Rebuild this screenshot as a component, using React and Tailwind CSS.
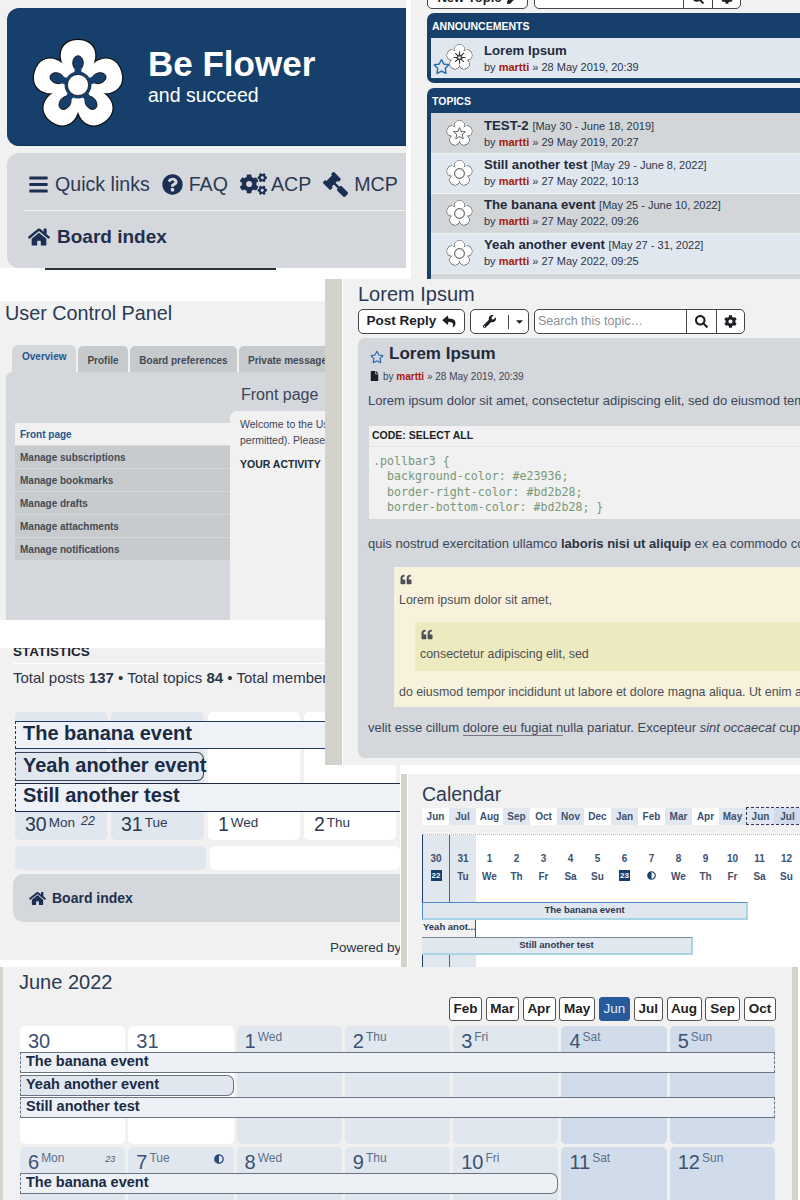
import React from 'react';
import {
  FaBars, FaQuestionCircle, FaCogs, FaGavel, FaHome, FaSearch, FaCog, FaWrench,
  FaReply, FaCaretDown, FaFile, FaQuoteLeft, FaAdjust, FaRegStar, FaPen,
} from 'react-icons/fa';

const PETAL = 'M-7 -10 C-24 -24 -21 -47 0 -47 C21 -47 24 -24 7 -10 Z';
const ANGLES = [0, 72, 144, 216, 288];

function Logo() {
  return (
    <svg viewBox="-50 -50 100 100" className="w-[96px] h-[96px] shrink-0 mt-[16px]">
      {ANGLES.map((a) => <path key={a} d={PETAL} transform={`rotate(${a})`} fill="#fff" stroke="#111" strokeWidth="2.6" />)}
      {ANGLES.map((a) => <path key={a} d={PETAL} transform={`rotate(${a})`} fill="#fff" />)}
      {ANGLES.map((a) => <ellipse key={a} cx="0" cy="-23" rx="5.5" ry="7.5" transform={`rotate(${a})`} fill="#173f6b" stroke="#111" strokeWidth="0.9" />)}
      <circle r="14" fill="#173f6b" />
      {ANGLES.map((a) => <rect key={a} x="-3.5" y="-24" width="7" height="12" transform={`rotate(${a})`} fill="#173f6b" />)}
      <circle r="11" fill="#fff" stroke="#111" strokeWidth="0.8" />
    </svg>
  );
}

function TopicIcon({ variant }) {
  return (
    <svg viewBox="-50 -50 100 100" className="w-[27px] h-[27px] shrink-0">
      {ANGLES.map((a) => <path key={a} d={PETAL} transform={`rotate(${a})`} fill="#fff" stroke="#333" strokeWidth="3.5" />)}
      {ANGLES.map((a) => <path key={a} d={PETAL} transform={`rotate(${a})`} fill="#fff" />)}
      {variant === 'flower' && <circle r="18" fill="#fff" stroke="#333" strokeWidth="3.5" />}
      {variant === 'star' && <polygon points="0,-22 6,-7 22,-7 10,4 14,20 0,11 -14,20 -10,4 -22,-7 -6,-7" fill="#fff" stroke="#444" strokeWidth="3" />}
      {variant === 'ann' && (
        <g stroke="#333" strokeWidth="4" strokeLinecap="round">
          {[0, 45, 90, 135].map((a) => <line key={a} x1="0" y1="-21" x2="0" y2="21" transform={`rotate(${a})`} />)}
          <circle r="7" fill="#fff" />
        </g>
      )}
    </svg>
  );
}

function TopicRow({ title, range, date, icon, tint, star, h, textPad }) {
  return (
    <div className={`relative flex items-center ${h} ${tint} pl-[15px] border-b border-[#eef0f0]`}>
      <TopicIcon variant={icon} />
      {star && <FaRegStar className="absolute left-[2px] bottom-[2px] text-[#2a6cb0] w-[17px] h-[17px]" />}
      <div className={`ml-[11px] ${textPad}`}>
        <div className="text-[13.2px] leading-[17px] font-bold text-[#1f2a3c] whitespace-nowrap">
          {title} <span className="text-[11px] font-normal text-[#2b3648]">{range}</span>
        </div>
        <div className="text-[11px] leading-[15px] text-[#2b3648] whitespace-nowrap">
          by <span className="font-bold text-[#a8190c]">martti</span> » {date}
        </div>
      </div>
    </div>
  );
}

function TopicBox({ name, children, className }) {
  return (
    <div className={`bg-[#173f6b] rounded-l-[7px] pl-[4px] pb-[4px] ${className}`}>
      <div className="h-[25px] pt-[3px] flex items-center pl-[1px] text-[10.5px] font-bold text-white">{name}</div>
      {children}
    </div>
  );
}

function MenuLink({ icon, label }) {
  return (
    <div className="flex items-center gap-[6px] whitespace-nowrap">
      {icon}
      <span className="text-[19.6px] text-[#2b3a54]">{label}</span>
    </div>
  );
}

function TopLeft() {
  return (
    <div className="absolute left-0 top-0 w-[411px] h-[270px] bg-white">
      <div className="w-[406px] h-[268px] bg-[#f0f1f0] pl-[7px] pt-[8px]">
        <div className="h-[138px] bg-[#173f6b] rounded-l-[12px] flex items-center pl-[23px] border-b border-[#0d2e5c]">
          <Logo />
          <div className="ml-[22px] text-white">
            <div className="text-[35px] leading-[38px] font-bold -mt-[2px]">Be Flower</div>
            <div className="text-[19.5px] leading-[24px]">and succeed</div>
          </div>
        </div>
        <div className="mt-[7px] h-[115px] bg-[#d4d7db] rounded-l-[12px] pl-[17px] pt-[16px]">
          <div className="flex items-center gap-[12px] h-[31px] pl-[4px]">
            <MenuLink icon={<FaBars className="w-[21px] h-[21px] text-[#1a2f52]" />} label="Quick links" />
            <MenuLink icon={<FaQuestionCircle className="w-[21px] h-[21px] text-[#1a2f52]" />} label="FAQ" />
            <div className="flex items-center gap-[4px] whitespace-nowrap">
              <FaCogs className="w-[27px] h-[24px] text-[#1a2f52]" />
              <span className="text-[19.6px] text-[#2b3a54]">ACP</span>
            </div>
            <MenuLink icon={<FaGavel className="w-[25px] h-[25px] text-[#1a2f52] -scale-x-100" />} label="MCP" />
          </div>
          <div className="mt-[10px] h-px bg-[#f0f1f0]" />
          <div className="flex items-center gap-[7px] pl-[4px] mt-[12px]">
            <FaHome className="w-[22px] h-[20px] text-[#1a2f52]" />
            <span className="text-[19px] font-bold text-[#1f2f4e]">Board index</span>
          </div>
        </div>
      </div>
      <div className="ml-[45px] w-[231px] h-[2px] bg-[#2b2f38]" />
    </div>
  );
}

function TopRight() {
  return (
    <div className="absolute left-[411px] top-0 w-[389px] h-[279px] bg-[#f0f1f0] overflow-hidden pl-[16px]">
      <div className="flex gap-[6px] -mt-[13px] h-[22px] text-[13px] font-bold text-[#222]">
        <div className="w-[101px] h-[22px] bg-white border border-[#444] rounded-[5px] flex items-center justify-center gap-[5px]">
          New Topic <FaPen className="w-[11px] h-[11px]" />
        </div>
        <div className="w-[207px] h-[22px] bg-white border border-[#444] rounded-[5px] flex items-center justify-end">
          <div className="w-[29px] h-full border-l border-[#444] flex items-center justify-center"><FaSearch className="w-[12px] h-[12px]" /></div>
          <div className="w-[28px] h-full border-l border-[#444] flex items-center justify-center"><FaCog className="w-[12px] h-[12px]" /></div>
        </div>
      </div>
      <TopicBox name="ANNOUNCEMENTS" className="mt-[4px] h-[70px]">
        <TopicRow title="Lorem Ipsum" date="28 May 2019, 20:39" icon="ann" tint="bg-[#e1e7ef]" star h="h-[40px]" textPad="pt-[1px]" />
      </TopicBox>
      <TopicBox name="TOPICS" className="mt-[5px] h-[200px]">
        <TopicRow title="TEST-2" range="[May 30 - June 18, 2019]" date="29 May 2019, 20:27" icon="star" tint="bg-[#d3d6d9]" h="h-[41px]" />
        <TopicRow title="Still another test" range="[May 29 - June 8, 2022]" date="27 May 2022, 10:13" icon="flower" tint="bg-[#e1e7ef]" h="h-[40px]" textPad="pb-[3px]" />
        <TopicRow title="The banana event" range="[May 25 - June 10, 2022]" date="27 May 2022, 09:26" icon="flower" tint="bg-[#d3d6d9]" h="h-[40px]" textPad="pb-[3px]" />
        <TopicRow title="Yeah another event" range="[May 27 - 31, 2022]" date="27 May 2022, 09:25" icon="flower" tint="bg-[#e1e7ef]" h="h-[40px]" textPad="pb-[3px]" />
        <div className="h-[20px] bg-[#d3d6d9]" />
      </TopicBox>
    </div>
  );
}

function ControlPanel() {
  const items = ['Manage subscriptions', 'Manage bookmarks', 'Manage drafts', 'Manage attachments', 'Manage notifications'];
  return (
    <div className="absolute left-0 top-[301px] w-[325px] h-[319px] bg-[#f0f1f0] overflow-hidden">
      <div className="pl-[5px] text-[19.8px] leading-[24px] text-[#2b3a54]">User Control Panel</div>
      <div className="flex items-end pl-[12px] mt-[20px] gap-[2px] text-[10px] font-bold h-[27px] whitespace-nowrap">
        <div className="w-[64px] shrink-0 h-[27px] bg-[#d4d7db] rounded-t-[6px] text-[#25568f] pl-[10px] pt-[4px]">Overview</div>
        <div className="w-[50px] shrink-0 h-[26px] bg-[#c7cacd] rounded-t-[5px] text-[#444a55] text-center pt-[7px]">Profile</div>
        <div className="w-[107px] shrink-0 h-[26px] bg-[#c7cacd] rounded-t-[5px] text-[#444a55] text-center pt-[7px]">Board preferences</div>
        <div className="w-[100px] shrink-0 h-[26px] bg-[#c7cacd] rounded-t-[5px] text-[#444a55] pl-[9px] pt-[7px]">Private messages</div>
      </div>
      <div className="ml-[6px] h-[248px] bg-[#d4d7db] rounded-tl-[6px] flex">
        <div className="w-[224px] pl-[9px] pt-[51px] text-[10px] font-bold text-[#444a55]">
          <div className="h-[22px] bg-[#f0f1f0] text-[#25568f] pl-[5px] flex items-center">Front page</div>
          {items.map((t) => (
            <div key={t} className="h-[23px] bg-[#c8cbce] pl-[5px] flex items-center border-t border-[#d4d7db]">{t}</div>
          ))}
        </div>
        <div className="flex-1 relative whitespace-nowrap overflow-hidden">
          <div className="pl-[11px] pt-[12px] h-[39px] text-[16px] leading-[22px] text-[#3b4658]">Front page</div>
          <div className="h-full bg-[#f0f1f0] rounded-tl-[7px] pl-[10px] pt-[5px] text-[10.5px] leading-[16px] text-[#3b4658]">
            <div>Welcome to the User Control Panel</div>
            <div>permitted). Please note</div>
            <div className="mt-[8px] font-bold text-[#222b3a]">YOUR ACTIVITY</div>
          </div>
        </div>
      </div>
    </div>
  );
}

function TopicPage() {
  return (
    <div className="absolute left-[325px] top-[279px] w-[475px] h-[486px] flex overflow-hidden bg-white">
      <div className="w-[17px] bg-[#d3d3cb] shrink-0" />
      <div className="ml-px flex-1 bg-[#f0f1f0] pl-[15px] whitespace-nowrap min-w-0">
        <div className="text-[20px] leading-[24px] mt-[3px] text-[#2b3a54]">Lorem Ipsum</div>
        <div className="flex gap-[5px] mt-[3px] h-[25px] text-[#1c1f26]">
          <div className="w-[107px] bg-white border border-[#444] rounded-[5px] flex items-center justify-center gap-[6px] text-[13.5px] font-bold">
            Post Reply <FaReply className="w-[14px] h-[13px]" />
          </div>
          <div className="w-[59px] bg-white border border-[#444] rounded-[5px] flex items-center">
            <FaWrench className="w-[13px] h-[13px] ml-[12px]" />
            <div className="w-px h-[14px] bg-[#444] ml-[12px]" />
            <FaCaretDown className="w-[11px] h-[11px] ml-[5px]" />
          </div>
          <div className="w-[211px] bg-white border border-[#444] rounded-[5px] flex items-center text-[12.5px] text-[#8a8f97] pl-[3px]">
            <span className="flex-1">Search this topic…</span>
            <div className="w-[30px] h-full border-l border-[#444] flex items-center justify-center text-[#1c1f26]"><FaSearch className="w-[13px] h-[13px]" /></div>
            <div className="w-[28px] h-full border-l border-[#444] flex items-center justify-center text-[#1c1f26]"><FaCog className="w-[13px] h-[13px]" /></div>
          </div>
        </div>
        <div className="mt-[4px] h-[420px] bg-[#d4d7db] rounded-l-[7px] pl-[10px] text-[#3b4658] text-[13px]">
          <div className="flex items-center pt-[5px] h-[27px] ml-[2px]">
            <FaRegStar className="w-[14px] h-[14px] text-[#2a6cb0] mt-[6px]" />
            <span className="ml-[5px] text-[17px] font-bold text-[#1f2a3c]">Lorem Ipsum</span>
          </div>
          <div className="flex items-center gap-[4px] h-[20px] mt-[1px] ml-[2px] text-[10px] text-[#3b4658]">
            <FaFile className="w-[9px] h-[10px] text-[#1c1f26]" />
            <span>by <span className="font-bold text-[#a8190c]">martti</span> » 28 May 2019, 20:39</span>
          </div>
          <div className="mt-[6px] leading-[18px]">Lorem ipsum dolor sit amet, consectetur adipiscing elit, sed do eiusmod tempor incididunt</div>
          <div className="mt-[16px] ml-px bg-[#f0f1f0]">
            <div className="h-[21px] flex items-center pl-[3px] text-[10.5px] font-bold text-[#1c1f26] border-b border-[#e1e7ef]">CODE: SELECT ALL</div>
            <pre className="pl-[4px] pt-[7px] pb-[4px] font-['DejaVu_Sans_Mono',monospace] text-[11.6px] leading-[15.3px] text-[#789878]">{`.pollbar3 {
  background-color: #e23936;
  border-right-color: #bd2b28;
  border-bottom-color: #bd2b28; }`}</pre>
          </div>
          <div className="mt-[16px] leading-[18px]">quis nostrud exercitation ullamco <b className="text-[#2b3442]">laboris nisi ut aliquip</b> ex ea commodo consequat</div>
          <div className="mt-[14px] ml-[26px] h-[140px] bg-[#f8f2dc] pl-[5px] pt-[7px] text-[#4a4f56] text-[12.4px]">
            <FaQuoteLeft className="w-[14px] h-[11px] text-[#4a4f5a]" />
            <div className="mt-[7px] leading-[16px]">Lorem ipsum dolor sit amet,</div>
            <div className="mt-[14px] ml-[16px] h-[49px] bg-[#eeeac0] pl-[5px] pt-[7px]">
              <FaQuoteLeft className="w-[14px] h-[11px] text-[#4a4f5a]" />
              <div className="mt-[6px] leading-[16px]">consectetur adipiscing elit, sed</div>
            </div>
            <div className="mt-[13px] leading-[16px]">do eiusmod tempor incididunt ut labore et dolore magna aliqua. Ut enim ad minim</div>
          </div>
          <div className="mt-[12px] leading-[18px]">velit esse cillum <span className="border-b border-[#778]">dolore eu fugiat n</span>ulla pariatur. Excepteur <i>sint occaecat</i> cupidatat non</div>
        </div>
      </div>
    </div>
  );
}

function DayCell({ num, day, week, tint }) {
  return (
    <div className={`rounded-[5px] h-[128px] flex items-end pl-[10px] pb-[6px] gap-[2px] ${tint} text-[#2b3a54] whitespace-nowrap`}>
      <span className="text-[19.5px] leading-[20px]">{num}</span>
      <span className="text-[13.5px] leading-[16px] pb-[3px]">{day}</span>
      {week && <i className="text-[12.5px] leading-[16px] pb-[5px] ml-[4px]">{week}</i>}
    </div>
  );
}

const STAT_BAR = "absolute left-0 border-y border-l [border-left-style:dashed] pl-[7px] text-[20px] font-bold text-[#1a2b45] whitespace-nowrap";

function Stats() {
  return (
    <div className="absolute left-0 top-[648px] w-[400px] h-[312px] bg-[#f0f1f0] overflow-hidden">
      <div className="ml-[13px] h-[20px] -mt-[4px] text-[13.5px] leading-[16px] font-bold text-[#1c2330] border-b border-white">STATISTICS</div>
      <div className="pl-[13px] mt-[4px] text-[15px] leading-[20px] text-[#2b3648] whitespace-nowrap">
        Total posts <b>137</b> • Total topics <b>84</b> • Total members <b>9</b>
      </div>
      <div className="relative mt-[24px] ml-[15px] grid grid-cols-[92px_93px_92px_92px] gap-x-[4px]">
        <DayCell num="30" day="Mon" week="22" tint="bg-[#e1e7ef]" />
        <DayCell num="31" day="Tue" tint="bg-[#e1e7ef]" />
        <DayCell num="1" day="Wed" tint="bg-white" />
        <DayCell num="2" day="Thu" tint="bg-white" />
        <div className={`${STAT_BAR} top-[9px] w-[390px] h-[28px] bg-[#eef1f5] border-[#1f3a63] leading-[23px]`}>The banana event</div>
        <div className="absolute left-0 top-[40px] w-[189px] h-[29px] bg-[#e1e7ef] border border-[#3a4458] [border-left-style:dashed] rounded-r-[7px] pl-[7px] text-[20px] leading-[24px] font-bold text-[#1a2b45] whitespace-nowrap">Yeah another event</div>
        <div className={`${STAT_BAR} top-[71px] w-[390px] h-[29px] bg-[#eef1f5] border-[#1f2a44] leading-[22px]`}>Still another test</div>
      </div>
      <div className="flex gap-[4px] mt-[6px] ml-[15px] h-[24px]">
        <div className="w-[191px] bg-[#e1e7ef] rounded-[5px]" />
        <div className="w-[190px] bg-white rounded-[5px]" />
      </div>
      <div className="mt-[4px] ml-[13px] h-[48px] bg-[#d4d7db] rounded-l-[10px] flex items-center pl-[16px] gap-[6px]">
        <FaHome className="w-[17px] h-[15px] text-[#1a2f52]" />
        <span className="text-[14px] font-bold text-[#1f2f4e]">Board index</span>
      </div>
      <div className="mt-[17px] pl-[330px] text-[13.5px] leading-[18px] text-[#2b3648] whitespace-nowrap">Powered by</div>
    </div>
  );
}

const STRIP_MONTHS = ['Jun', 'Jul', 'Aug', 'Sep', 'Oct', 'Nov', 'Dec', 'Jan', 'Feb', 'Mar', 'Apr', 'May'];
const COL_DAYS = [
  ['30', '22'], ['31', 'Tu'], ['1', 'We'], ['2', 'Th'], ['3', 'Fr'], ['4', 'Sa'], ['5', 'Su'],
  ['6', '23'], ['7', 'moon'], ['8', 'We'], ['9', 'Th'], ['10', 'Fr'], ['11', 'Sa'], ['12', 'Su'],
];

function CalendarWin() {
  return (
    <div className="absolute left-[401px] top-[774px] w-[399px] h-[193px] flex overflow-hidden bg-white">
      <div className="w-[6px] bg-[#d3d3cb] shrink-0" />
      <div className="ml-px flex-1 min-w-0 bg-[#f0f1f0] pl-[14px] whitespace-nowrap">
        <div className="text-[19.5px] leading-[24px] mt-[8px] text-[#2b3a54]">Calendar</div>
        <div className="flex mt-[2px] text-[10px] font-bold text-[#3d5070] h-[17px]">
          {STRIP_MONTHS.map((m, i) => (
            <div key={m} className={`w-[27px] shrink-0 flex items-center justify-center ${i % 2 ? 'bg-[#e1e7ef]' : 'bg-white'}`}>{m}</div>
          ))}
          <div className="flex border border-dashed border-[#2b3a54] -my-px h-[18px]">
            <div className="w-[27px] shrink-0 flex items-center justify-center bg-[#e1e7ef]">Jun</div>
            <div className="w-[27px] shrink-0 flex items-center justify-center bg-[#d1dcea]">Jul</div>
            <div className="w-[27px] shrink-0 bg-[#e1e7ef]" />
          </div>
        </div>
        <div className="relative mt-[9px] h-[140px] bg-white border-t border-dotted border-[#8fc5e0]">
          <div className="flex h-full text-[10px] font-bold text-[#3d5070]">
            {COL_DAYS.map(([n, d], i) => (
              <div key={n} className={`w-[27px] shrink-0 flex flex-col items-center pt-[17px] ${i < 2 ? 'bg-[#e1e7ef]' : ''} ${i === 0 ? 'border-l border-[#1f3a63]' : ''} ${i === 1 ? 'border-l border-[#5a6478]' : ''}`}>
                <span className="h-[18px] leading-[14px]">{n}</span>
                {d === 'moon' ? <FaAdjust className="mt-[1px] w-[9px] h-[9px] text-[#173f6b]" /> : null}
                {d === '22' || d === '23' ? <span className="w-[11px] h-[11px] bg-[#173f6b] text-white text-[8px] leading-[11px] text-center">{d}</span> : null}
                {d !== 'moon' && d !== '22' && d !== '23' ? <span className="leading-[14px]">{d}</span> : null}
              </div>
            ))}
          </div>
          <div className="absolute left-0 top-[67px] w-[326px] h-[18px] bg-[#e1e7ef] border-t border-l border-[#4a8ac8] border-r-2 border-b-2 border-r-[#a8d4e8] border-b-[#a8d4e8] text-center text-[9.5px] leading-[14px] font-bold text-[#2b3a54]">The banana event</div>
          <div className="absolute left-0 top-[85px] w-[54px] h-[17px] bg-[#f0f1f0] border-r border-[#2b5ea0] text-[9.5px] leading-[14px] font-bold text-[#2b3a54] pl-[1px] overflow-hidden">Yeah anot...</div>
          <div className="absolute left-0 top-[102px] w-[271px] h-[18px] bg-[#e1e7ef] border-t border-[#7c8798] border-r-2 border-b-2 border-r-[#a8d4e8] border-b-[#a8d4e8] text-center text-[9.5px] leading-[14px] font-bold text-[#2b3a54]">Still another test</div>
        </div>
      </div>
    </div>
  );
}

const BUTTON_MONTHS = [
  ['Feb', 'w-[33px]'], ['Mar', 'w-[33px]'], ['Apr', 'w-[33px]'], ['May', 'w-[36px]'], ['Jun', 'w-[31px]'],
  ['Jul', 'w-[29px]'], ['Aug', 'w-[35px]'], ['Sep', 'w-[35px]'], ['Oct', 'w-[32px]'],
];

function JuneCell({ num, day, tint, extra }) {
  return (
    <div className={`rounded-[5px] h-[118px] ${tint} pl-[8px] pt-[3px] flex items-start gap-[2px] text-[#3b5272] relative`}>
      <span className="text-[20px] leading-[24px]">{num}</span>
      <span className="text-[12px] leading-[16px] text-[#5a6f8c]">{day}</span>
      {extra}
    </div>
  );
}

function JuneBar({ top, width, title, rounded, tint }) {
  return (
    <div className={`absolute left-0 ${top} ${width} h-[21px] border border-[#6a7486] [border-left-style:dashed] pl-[5px] text-[14.5px] leading-[17px] font-bold text-[#1a2b45] whitespace-nowrap ${rounded ? 'rounded-r-[7px]' : '[border-right-style:dashed]'} ${tint}`}>
      {title}
    </div>
  );
}

function JuneWin() {
  const blue = 'bg-[#e1e7ef]';
  const sat = 'bg-[#d1dcea]';
  return (
    <div className="absolute left-0 top-[967px] w-[800px] h-[233px] flex overflow-hidden bg-white">
      <div className="w-[3px] bg-[#d3d3cb] shrink-0" />
      <div className="w-[789px] bg-[#f0f1f0] pl-[16px]">
        <div className="text-[20px] leading-[24px] mt-[3px] text-[#2b3a54]">June 2022</div>
        <div className="flex justify-end gap-[3.75px] mt-[3px] h-[24px] pr-[16px] text-[13.5px] font-bold text-[#222]">
          {BUTTON_MONTHS.map(([m, w]) => (
            <div key={m} className={`${w} flex items-center justify-center rounded-[3px] border ${m === 'Jun' ? 'bg-[#27599b] border-[#27599b] text-[#e8eef6] font-normal' : 'bg-white border-[#555]'}`}>{m}</div>
          ))}
        </div>
        <div className="relative mt-[5px] ml-[1px] w-[755px] grid grid-cols-7 gap-[3px]">
          <JuneCell num="30" tint="bg-white" />
          <JuneCell num="31" tint="bg-white" />
          <JuneCell num="1" day="Wed" tint={blue} />
          <JuneCell num="2" day="Thu" tint={blue} />
          <JuneCell num="3" day="Fri" tint={blue} />
          <JuneCell num="4" day="Sat" tint={sat} />
          <JuneCell num="5" day="Sun" tint={sat} />
          <JuneCell num="6" day="Mon" tint={blue} extra={<i className="absolute right-[10px] top-[6px] text-[9px] text-[#556]">23</i>} />
          <JuneCell num="7" day="Tue" tint={blue} extra={<FaAdjust className="absolute right-[10px] top-[7px] w-[10px] h-[10px] text-[#2b4a7c]" />} />
          <JuneCell num="8" day="Wed" tint={blue} />
          <JuneCell num="9" day="Thu" tint={blue} />
          <JuneCell num="10" day="Fri" tint={blue} />
          <JuneCell num="11" day="Sat" tint={sat} />
          <JuneCell num="12" day="Sun" tint={sat} />
          <JuneBar top="top-[26px]" width="w-[755px]" title="The banana event" tint="bg-[#edf1f5]" />
          <JuneBar top="top-[49px]" width="w-[214px]" title="Yeah another event" rounded tint="bg-[#e1e7ef]" />
          <JuneBar top="top-[71px]" width="w-[755px]" title="Still another test" tint="bg-[#edf1f5]" />
          <JuneBar top="top-[147px]" width="w-[538px]" title="The banana event" rounded tint="bg-[#edf1f5]" />
        </div>
      </div>
      <div className="w-[6px] bg-[#d3d3cb] shrink-0" />
    </div>
  );
}

export default function App() {
  return (
    <div className="relative w-[800px] h-[1200px] bg-white overflow-hidden font-['Liberation_Sans',Arial,sans-serif]">
      <TopLeft />
      <TopRight />
      <ControlPanel />
      <Stats />
      <TopicPage />
      <CalendarWin />
      <JuneWin />
    </div>
  );
}
